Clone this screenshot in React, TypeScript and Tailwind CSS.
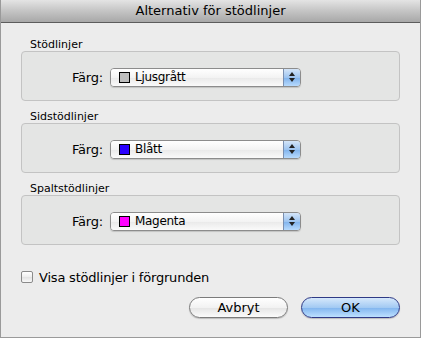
import React from "react";

const font = { fontFamily: '"DejaVu Sans", "Lucida Grande", sans-serif' };

function Popup({ color, label }: { color: string; label: string }) {
  return (
    <div className="flex h-[19px] w-[191px] items-stretch overflow-hidden rounded-[4px] border border-[#8c8c8c] shadow-[0_1px_1px_rgba(0,0,0,0.15)]">
      <div className="flex flex-1 items-center bg-[linear-gradient(#ffffff,#f3f3f3_50%,#e9e9e9_51%,#fafafa)] pl-[8px]">
        <div className="h-[11px] w-[11px] border border-black" style={{ backgroundColor: color }} />
        <span className="ml-[5px] text-[12px] leading-none tracking-[-0.3px] text-black">{label}</span>
      </div>
      <div className="flex w-[17px] flex-col items-center justify-center gap-[2px] border-l border-[#7a8fb0] bg-[linear-gradient(#d4e5f8,#9dc4f0_50%,#7fb2ec_51%,#b7dafd)]">
        <svg width="6" height="4" viewBox="0 0 6 4"><path d="M3 0L6 4H0z" fill="#222" /></svg>
        <svg width="6" height="4" viewBox="0 0 6 4"><path d="M0 0H6L3 4z" fill="#222" /></svg>
      </div>
    </div>
  );
}

function Group({ title, color, label, first }: { title: string; color: string; label: string; first?: boolean }) {
  return (
    <div className={first ? "" : "mt-[9px]"}>
      <div className="h-[13px] pl-[9px] text-[11px] leading-[13px] text-black">{title}</div>
      <div className="flex h-[50px] items-center rounded-[4px] border border-[#c3c3c3] bg-[#e4e5e4] pl-[50px] pt-[2px]">
        <span className="w-[30px] text-[13px] leading-none tracking-[-0.2px] text-black">Färg:</span>
        <div className="ml-[8px]">
          <Popup color={color} label={label} />
        </div>
      </div>
    </div>
  );
}

export default function App() {
  return (
    <div className="h-[338px] w-[421px] bg-white" style={font}>
      <div className="flex h-[338px] w-[421px] flex-col border-x border-b border-[#9a9a9a] bg-[#ececec]">
        <div className="flex h-[23px] items-center justify-center border-b border-[#5c5c5c] bg-[linear-gradient(#e4e4e4,#c4c4c4_50%,#a8a8a8)] text-[13px] text-black">
          Alternativ för stödlinjer
        </div>
        <div className="flex flex-1 flex-col px-[20px] pt-[15px]">
          <Group first title="Stödlinjer" color="#bdbdbd" label="Ljusgrått" />
          <Group title="Sidstödlinjer" color="#2a00ff" label="Blått" />
          <Group title="Spaltstödlinjer" color="#ff00ff" label="Magenta" />
          <div className="mt-[26px] flex h-[12px] items-center">
            <div className="h-[12px] w-[12px] rounded-[2px] border border-[#8a8a8a] bg-[linear-gradient(#ffffff,#eeeeee_50%,#e2e2e2_51%,#f8f8f8)]" />
            <span className="ml-[6px] text-[13px] leading-none tracking-[-0.2px] text-black">Visa stödlinjer i förgrunden</span>
          </div>
          <div className="mt-[14px] flex justify-end gap-[13px]">
            <button className="flex h-[21px] w-[99px] items-center justify-center rounded-full border border-[#7b7b7b] bg-[linear-gradient(#ffffff,#f2f2f2_50%,#e4e4e4_51%,#fbfbfb)] text-[13px] leading-none text-black shadow-[0_1px_1px_rgba(0,0,0,0.2)]">
              Avbryt
            </button>
            <button className="flex h-[21px] w-[99px] items-center justify-center rounded-full border border-[#2f3a86] bg-[linear-gradient(#d6e8fb,#a3caf3_50%,#80b4ee_51%,#bde0ff)] text-[13px] leading-none text-black shadow-[0_1px_1px_rgba(0,0,0,0.2)]">
              OK
            </button>
          </div>
        </div>
      </div>
    </div>
  );
}
